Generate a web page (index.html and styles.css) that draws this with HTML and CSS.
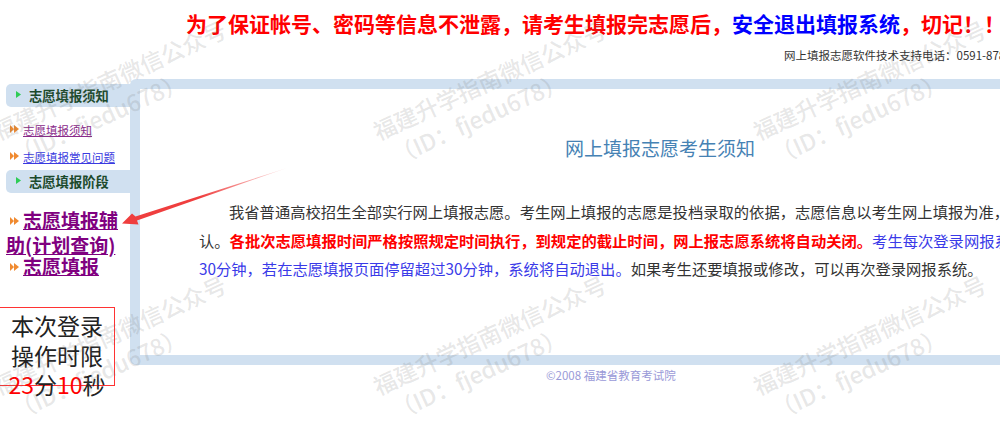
FILE: index.html
```html
<!DOCTYPE html>
<html lang="zh">
<head>
<meta charset="utf-8">
<title>网上填报志愿</title>
<link rel="stylesheet" href="styles.css">
</head>
<body>
<header class="top">
  <h1 class="warn">为了保证帐号、密码等信息不泄露，请考生填报完志愿后，<span class="blue">安全退出填报系统</span>，切记！！</h1>
  <p class="support">网上填报志愿软件技术支持电话：0591-87870000</p>
</header>
<div class="page">
  <aside class="side">
    <h2 class="bar"><svg class="tri" viewBox="0 0 5 7"><path d="M0 0L5 3.5L0 7Z"/></svg>志愿填报须知</h2>
    <ul class="links">
      <li><svg class="arrow" viewBox="0 0 9 8"><path d="M0 0L4 4L0 8ZM4 0L9 4L4 8Z"/></svg><a class="visited" href="#">志愿填报须知</a></li>
      <li><svg class="arrow" viewBox="0 0 9 8"><path d="M0 0L4 4L0 8ZM4 0L9 4L4 8Z"/></svg><a href="#">志愿填报常见问题</a></li>
    </ul>
    <h2 class="bar"><svg class="tri" viewBox="0 0 5 7"><path d="M0 0L5 3.5L0 7Z"/></svg>志愿填报阶段</h2>
    <div class="big">
      <p><svg class="arrow" viewBox="0 0 9 8"><path d="M0 0L4 4L0 8ZM4 0L9 4L4 8Z"/></svg><a href="#">志愿填报辅助(计划查询)</a></p>
      <p class="next"><svg class="arrow" viewBox="0 0 9 8"><path d="M0 0L4 4L0 8ZM4 0L9 4L4 8Z"/></svg><a href="#">志愿填报</a></p>
    </div>
    <div class="timer">
      <p>本次登录</p>
      <p>操作时限</p>
      <p class="count"><span class="red">23</span>分<span class="red">10</span>秒</p>
    </div>
  </aside>
  <main class="frame">
    <h2 class="title">网上填报志愿考生须知</h2>
    <p class="notice">我省普通高校招生全部实行网上填报志愿。考生网上填报的志愿是投档录取的依据，志愿信息以考生网上填报为准，请考生<br>认。<strong class="red">各批次志愿填报时间严格按照规定时间执行，到规定的截止时间，网上报志愿系统将自动关闭。</strong><span class="link">考生每次登录网报系统时限为<br>30分钟，若在志愿填报页面停留超过30分钟，系统将自动退出。</span>如果考生还要填报或修改，可以再次登录网报系统。</p>
  </main>
</div>
<footer class="foot">©2008 福建省教育考试院</footer>
<svg class="pointer" viewBox="0 0 300 240" aria-hidden="true"><defs><linearGradient id="fade" gradientUnits="userSpaceOnUse" x1="287" y1="168" x2="200" y2="198"><stop offset="0" stop-color="#ef3e3e" stop-opacity="0.1"/><stop offset="1" stop-color="#ef3e3e"/></linearGradient></defs><path fill="url(#fade)" d="M287 168L137 220.5L138.5 224.5L122 223.5L132 213.5L135.5 216.5Z"/></svg>
<div class="marks" aria-hidden="true">
  <div class="mark"><span>福建升学指南微信公众号</span><span class="id">（ID：fjedu678）</span></div>
  <div class="mark"><span>福建升学指南微信公众号</span><span class="id">（ID：fjedu678）</span></div>
  <div class="mark"><span>福建升学指南微信公众号</span><span class="id">（ID：fjedu678）</span></div>
  <div class="mark"><span>福建升学指南微信公众号</span><span class="id">（ID：fjedu678）</span></div>
  <div class="mark"><span>福建升学指南微信公众号</span><span class="id">（ID：fjedu678）</span></div>
  <div class="mark"><span>福建升学指南微信公众号</span><span class="id">（ID：fjedu678）</span></div>
</div>
</body>
</html>
```
FILE: styles.css
```css
* { box-sizing: border-box; }
html, body { margin: 0; padding: 0; height: 437px; overflow: hidden; background: #fff; }
body {
  position: relative;
  width: 1000px;
  font-family: "Noto Sans CJK SC", "Liberation Sans", sans-serif;
  color: #333;
}
h1, h2, p, ul { margin: 0; padding: 0; }
ul { list-style: none; }

.top { height: 79px; overflow: hidden; white-space: nowrap; }
.warn {
  padding: 8px 0 0 186px;
  height: 46px;
  font-size: 21px;
  line-height: 30px;
  font-weight: 700;
  color: #f00;
}
.blue { color: #00f; }
.support {
  padding-left: 784px;
  font-size: 11.5px;
  line-height: 18px;
  color: #333;
}

.page { display: flex; height: 286px; }
.side { width: 130px; flex: none; padding-top: 5px; }
.bar {
  display: flex;
  align-items: center;
  height: 23px;
  margin-left: 6px;
  padding-left: 10px;
  border-radius: 5px 0 0 5px;
  background: #d0e0f0;
  font-size: 13.3px;
  font-weight: 700;
  color: #1c4a2c;
}
.tri { width: 5px; height: 7px; margin: -3px 8px 0 0; fill: #2ecc55; }
.links { height: 63px; padding: 10px 0 0 10px; font-size: 11.5px; line-height: 27px; }
.links li { display: flex; align-items: center; height: 27px; }
.links a { color: #3a3ae0; text-decoration: underline; }
.links a.visited { color: #8a2a8a; }
.arrow { width: 9px; height: 8px; margin-right: 4px; fill: #f08a30; flex: none; }
.links .arrow { margin-top: -4px; }

.big { padding: 14px 0 0 6px; font-size: 19px; line-height: 25px; font-weight: 700; color: #800080; }
.big p.next { margin-top: -4px; }
.big .arrow { margin: 0 4px 0 4px; vertical-align: 3px; }
.big a { color: #800080; text-decoration: underline; }

.timer {
  height: 79px;
  width: 115px;
  margin-top: 29px;
  padding-top: 3px;
  border: 1px solid #f33;
  border-left: 0;
  font-size: 23px;
  line-height: 29.5px;
  text-align: center;
  color: #222;
  white-space: nowrap;
}
.timer p { width: 114px; }
.red { color: #f00; }

.frame {
  width: 1060px;
  flex: none;
  border: 10px solid #d0e0f0;
  border-radius: 6px;
  overflow: hidden;
}
.title {
  margin-top: 44px;
  font-size: 19px;
  line-height: 30px;
  font-weight: 400;
  text-align: center;
  color: #4682b4;
}
.notice {
  margin: 34px 0 0 59px;
  width: 1100px;
  text-indent: 30px;
  font-size: 15.3px;
  line-height: 28.5px;
  white-space: nowrap;
  color: #333;
}
.notice strong { font-weight: 700; }
.link { color: #3a3ae8; }

.foot {
  padding: 2px 0 0 546px;
  font-size: 11.5px;
  line-height: 16px;
  color: #9a9ad8;
}

.pointer { position: absolute; left: 0; top: 0; width: 300px; height: 240px; }

.marks {
  position: absolute;
  left: -6.5px;
  top: 132px;
  display: grid;
  grid-template-columns: repeat(3, 380px);
  grid-auto-rows: 255px;
  pointer-events: none;
}
.mark {
  display: flex;
  flex-direction: column;
  height: 0;
  transform: rotate(-24.5deg);
  transform-origin: left top;
  font-size: 23px;
  font-weight: 500;
  line-height: 30px;
  white-space: nowrap;
  color: rgba(110, 110, 110, 0.17);
}
.mark span { display: block; margin-top: -15px; }
.mark .id { margin-top: 0; padding-left: 7px; }
```
